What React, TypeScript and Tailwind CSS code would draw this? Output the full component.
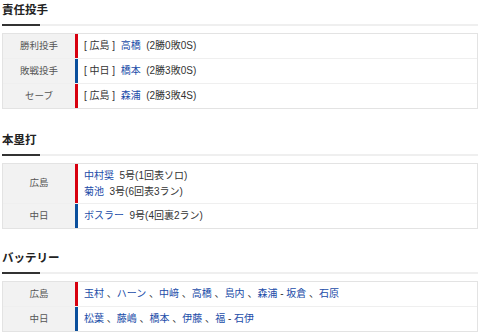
import React from "react";

type Team = "carp" | "dragons";

const barColor: Record<Team, string> = {
  carp: "bg-[#d7000f]",
  dragons: "bg-[#0b4f9c]",
};

function L({ children }: { children: React.ReactNode }) {
  return <span className="text-[#1a4ca8]">{children}</span>;
}

function Row({
  label,
  team,
  children,
  first,
  tight,
}: {
  label: string;
  team: Team;
  children: React.ReactNode;
  first?: boolean;
  tight?: boolean;
}) {
  return (
    <div className={`flex ${first ? "" : "border-t border-[#efefef]"}`}>
      <div className="w-[72px] shrink-0 bg-[#f2f2f2] flex items-center justify-center text-[9.5px] text-[#555]">
        {label}
      </div>
      <div className={`w-[3px] shrink-0 ${barColor[team]}`} />
      <div
        className={`flex-1 px-[6px] ${tight ? "pt-[4px] pb-[3px]" : "py-[4px]"} leading-[16px] text-[10px] text-[#333] bg-white`}
      >
        {children}
      </div>
    </div>
  );
}

function Section({
  title,
  children,
  className,
}: {
  title: string;
  children: React.ReactNode;
  className?: string;
}) {
  return (
    <section className={className}>
      <h2 className="h-[24px] pt-[1px] leading-[18px] text-[11.5px] font-bold text-[#222]">
        {title}
      </h2>
      <div className="flex h-[2px] bg-[#efefef]">
        <div className="w-[38px] bg-[#333]" />
      </div>
      <div className="mt-[7px] border border-[#e3e3e3]">{children}</div>
    </section>
  );
}

export default function App() {
  return (
    <div
      className="w-[480px] h-[333px] overflow-hidden bg-white px-[2px]"
      style={{ fontFamily: '"Liberation Sans", "Noto Sans CJK JP", sans-serif' }}
    >
      <Section title="責任投手">
        <Row label="勝利投手" team="carp" first>
          [ 広島 ]&nbsp; <L>高橋</L>&nbsp; (2勝0敗0S)
        </Row>
        <Row label="敗戦投手" team="dragons">
          [ 中日 ]&nbsp; <L>橋本</L>&nbsp; (2勝3敗0S)
        </Row>
        <Row label="セーブ" team="carp">
          [ 広島 ]&nbsp; <L>森浦</L>&nbsp; (2勝3敗4S)
        </Row>
      </Section>

      <Section title="本塁打" className="mt-[21px]">
        <Row label="広島" team="carp" first tight>
          <div>
            <L>中村奨</L>&nbsp; 5号(1回表ソロ)
          </div>
          <div>
            <L>菊池</L>&nbsp; 3号(6回表3ラン)
          </div>
        </Row>
        <Row label="中日" team="dragons">
          <L>ボスラー</L>&nbsp; 9号(4回裏2ラン)
        </Row>
      </Section>

      <Section title="バッテリー" className="mt-[19px]">
        <Row label="広島" team="carp" first>
          <L>玉村</L> 、<L>ハーン</L> 、<L>中﨑</L> 、<L>高橋</L> 、<L>島内</L> 、
          <L>森浦</L> - <L>坂倉</L> 、<L>石原</L>
        </Row>
        <Row label="中日" team="dragons">
          <L>松葉</L> 、<L>藤嶋</L> 、<L>橋本</L> 、<L>伊藤</L> 、<L>福</L> - <L>石伊</L>
        </Row>
      </Section>
    </div>
  );
}
